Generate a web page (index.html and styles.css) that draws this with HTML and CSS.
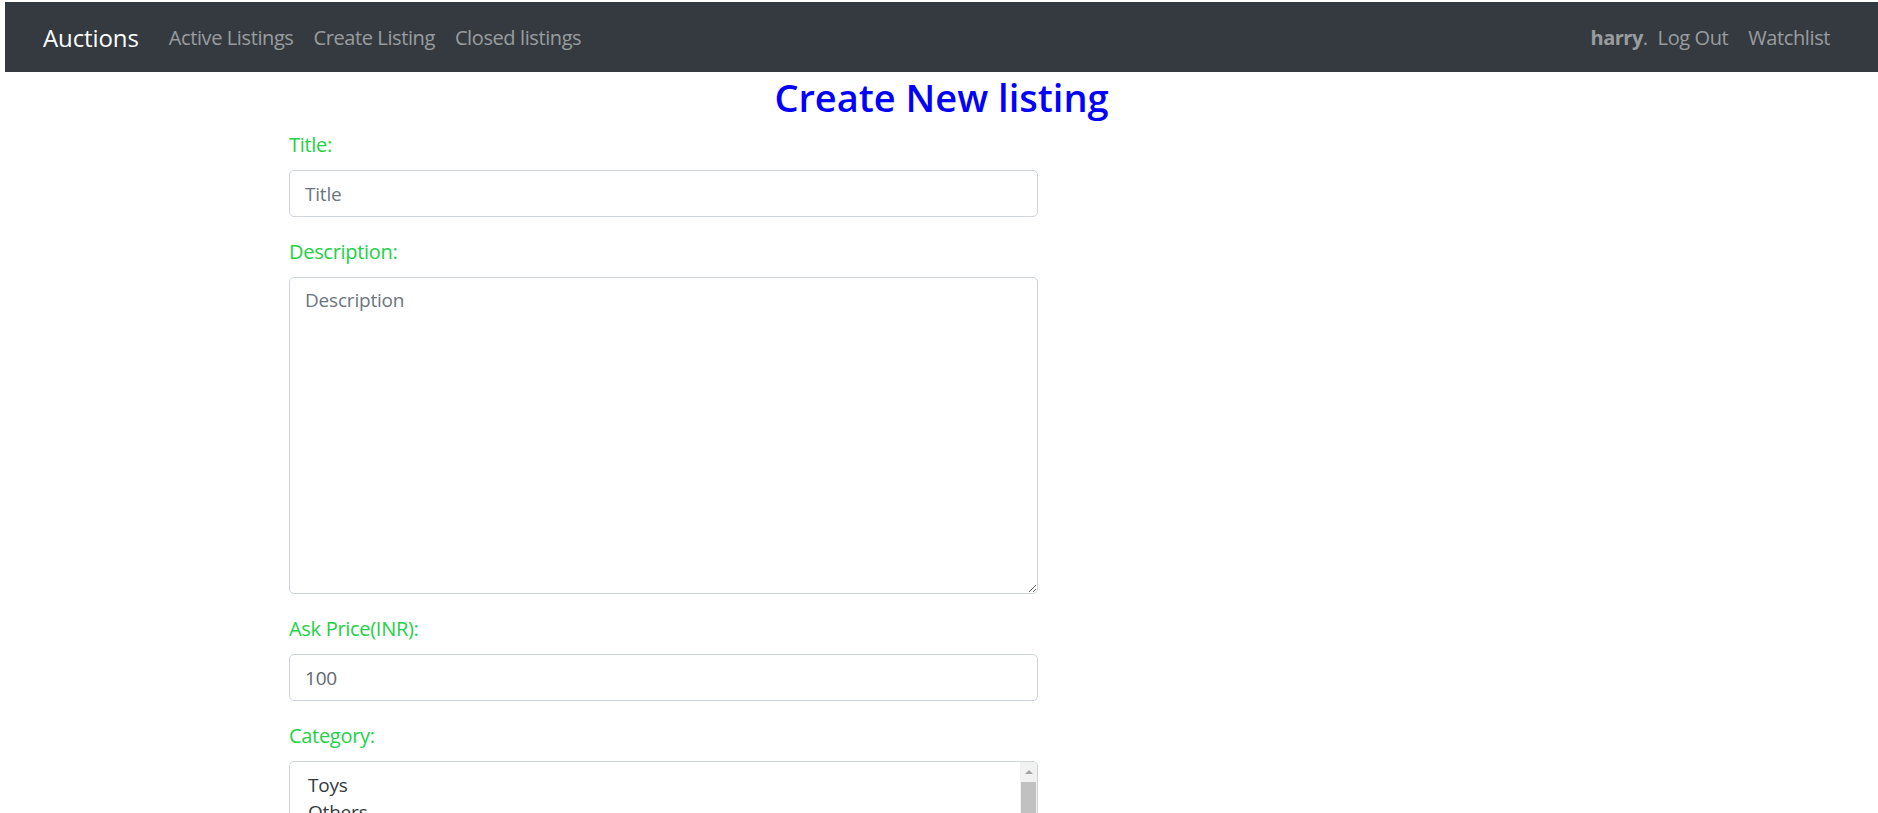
FILE: index.html
```html
<!DOCTYPE html>
<html lang="en">
<head>
<meta charset="utf-8">
<title>Auctions</title>
<link rel="stylesheet" href="styles.css">
</head>
<body>
<div class="page">
  <nav class="navbar">
    <a class="brand" href="#">Auctions</a>
    <ul class="nav">
      <li><a class="nav-link" href="#">Active Listings</a></li>
      <li><a class="nav-link" href="#">Create Listing</a></li>
      <li><a class="nav-link" href="#">Closed listings</a></li>
    </ul>
    <ul class="nav nav-right">
      <li class="user"><strong>harry</strong>.</li>
      <li><a class="nav-link" href="#">Log Out</a></li>
      <li><a class="nav-link" href="#">Watchlist</a></li>
    </ul>
  </nav>
  <h2 class="title">Create New listing</h2>
  <form class="form">
    <div class="form-group">
      <label class="label" for="title">Title:</label>
      <input class="control" id="title" type="text" placeholder="Title">
    </div>
    <div class="form-group">
      <label class="label" for="desc">Description:</label>
      <textarea class="control textarea" id="desc" placeholder="Description"></textarea>
    </div>
    <div class="form-group">
      <label class="label" for="price">Ask Price(INR):</label>
      <input class="control control-value" id="price" type="number" value="100">
    </div>
    <div class="form-group">
      <label class="label">Category:</label>
      <div class="listbox">
        <div class="options">
          <div class="option">Toys</div>
          <div class="option">Others</div>
          <div class="option">Electronics</div>
          <div class="option">Fashion</div>
        </div>
        <div class="scrollbar">
          <div class="arrow-up"></div>
          <div class="thumb"></div>
        </div>
      </div>
    </div>
  </form>
</div>
</body>
</html>
```

FILE: styles.css
```css
html, body {
  margin: 0;
  padding: 0;
  background: #fff;
}
body {
  font-family: "Open Sans", "Noto Sans", sans-serif;
  color: #212529;
}
.page {
  box-sizing: border-box;
  height: 813px;
  overflow: hidden;
  padding: 2px 0 0 5px;
}
.navbar {
  display: flex;
  align-items: center;
  box-sizing: border-box;
  height: 70px;
  background: #343a40;
  padding: 2px 38px 0;
}
.brand {
  color: #fff;
  text-decoration: none;
  font-size: 24px;
  line-height: 36px;
  margin-right: 20px;
  letter-spacing: -0.1px;
}
.nav {
  display: flex;
  align-items: center;
  list-style: none;
  margin: 0;
  padding: 0;
}
.nav-right {
  margin-left: auto;
}
.nav-link {
  display: block;
  padding: 0 10px;
  color: rgba(255, 255, 255, 0.5);
  text-decoration: none;
  font-size: 20px;
  line-height: 30px;
  letter-spacing: -0.4px;
}
.user {
  color: rgba(255, 255, 255, 0.5);
  font-size: 20px;
  line-height: 30px;
  letter-spacing: -0.5px;
}
.user strong {
  font-weight: 700;
}
.title {
  margin: 0 0 10px;
  text-align: center;
  color: #0000ff;
  font-size: 38px;
  font-weight: 600;
  line-height: 48px;
  padding-top: 1px;
  height: 47px;
}
.form {
  width: 749px;
  margin-left: 284px;
}
.form-group {
  margin-bottom: 20px;
}
.label {
  display: block;
  margin-bottom: 10px;
  color: #22d146;
  font-size: 20px;
  line-height: 30px;
  letter-spacing: -0.3px;
}
.control {
  display: block;
  box-sizing: border-box;
  width: 100%;
  height: 47px;
  margin: 0;
  padding: 7px 15px;
  border: 1px solid #ced4da;
  border-radius: 5px;
  background: #fff;
  color: #495057;
  font-family: "Open Sans", "Noto Sans", sans-serif;
  font-size: 19px;
  line-height: 30px;
  letter-spacing: -0.2px;
  outline: none;
}
.control-value {
  color: #5f6770;
}
.control::placeholder {
  color: #6c757d;
  opacity: 1;
}
.control::-webkit-outer-spin-button,
.control::-webkit-inner-spin-button {
  -webkit-appearance: none;
  margin: 0;
}
.textarea {
  height: 317px;
  resize: vertical;
}
.listbox {
  display: flex;
  box-sizing: border-box;
  height: 140px;
  border: 1px solid #ced4da;
  border-radius: 5px;
  overflow: hidden;
}
.options {
  flex: 1;
  padding: 10px 15px 0 18px;
  color: #343a40;
  font-size: 19px;
  letter-spacing: -0.2px;
}
.option {
  line-height: 27px;
}
.scrollbar {
  width: 17px;
  background: #f1f1f1;
  display: flex;
  flex-direction: column;
  align-items: center;
}
.arrow-up {
  margin-top: 8px;
  width: 0;
  height: 0;
  border-left: 4px solid transparent;
  border-right: 4px solid transparent;
  border-bottom: 4px solid #a3a3a3;
}
.thumb {
  margin-top: 8px;
  width: 15px;
  flex: 1;
  background: #c1c1c1;
}
```
